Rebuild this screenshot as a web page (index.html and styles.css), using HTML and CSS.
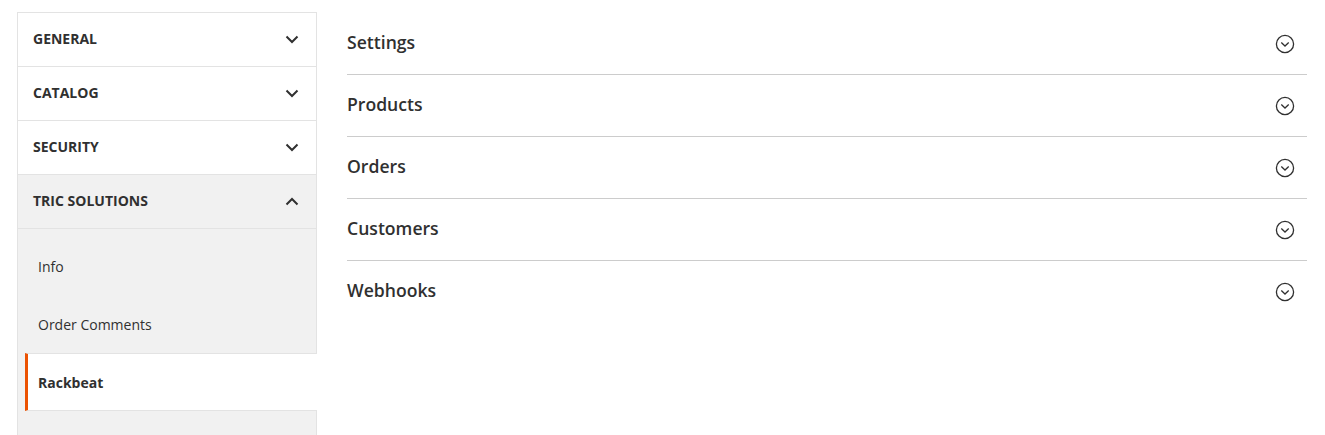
FILE: index.html
```html
<!DOCTYPE html>
<html>
<head>
<meta charset="utf-8">
<link rel="stylesheet" href="styles.css">
</head>
<body>
<div class="page">
  <nav class="side">
    <div class="group">
      <div class="title"><span>General</span>
        <svg class="chev" width="14" height="9" viewBox="0 0 14 9"><path d="M1.5 1.5 L7 7 L12.5 1.5" fill="none" stroke="#303030" stroke-width="2"/></svg>
      </div>
    </div>
    <div class="group">
      <div class="title"><span>Catalog</span>
        <svg class="chev" width="14" height="9" viewBox="0 0 14 9"><path d="M1.5 1.5 L7 7 L12.5 1.5" fill="none" stroke="#303030" stroke-width="2"/></svg>
      </div>
    </div>
    <div class="group">
      <div class="title"><span>Security</span>
        <svg class="chev" width="14" height="9" viewBox="0 0 14 9"><path d="M1.5 1.5 L7 7 L12.5 1.5" fill="none" stroke="#303030" stroke-width="2"/></svg>
      </div>
    </div>
    <div class="group open">
      <div class="title"><span>Tric Solutions</span>
        <svg class="chev" width="14" height="9" viewBox="0 0 14 9"><path d="M1.5 7.5 L7 2 L12.5 7.5" fill="none" stroke="#303030" stroke-width="2"/></svg>
      </div>
      <ul class="items">
        <li class="item">Info</li>
        <li class="item">Order Comments</li>
        <li class="item active">Rackbeat</li>
        <li class="item">Sales</li>
      </ul>
    </div>
  </nav>
  <main class="content">
    <section class="sec"><h2>Settings</h2><svg class="circ" width="20" height="20" viewBox="0 0 20 20"><circle cx="10" cy="10" r="8.6" fill="none" stroke="#303030" stroke-width="1.3"/><path d="M6.3 8.6 L10 12 L13.7 8.6" fill="none" stroke="#303030" stroke-width="1.3"/></svg></section>
    <section class="sec"><h2>Products</h2><svg class="circ" width="20" height="20" viewBox="0 0 20 20"><circle cx="10" cy="10" r="8.6" fill="none" stroke="#303030" stroke-width="1.3"/><path d="M6.3 8.6 L10 12 L13.7 8.6" fill="none" stroke="#303030" stroke-width="1.3"/></svg></section>
    <section class="sec"><h2>Orders</h2><svg class="circ" width="20" height="20" viewBox="0 0 20 20"><circle cx="10" cy="10" r="8.6" fill="none" stroke="#303030" stroke-width="1.3"/><path d="M6.3 8.6 L10 12 L13.7 8.6" fill="none" stroke="#303030" stroke-width="1.3"/></svg></section>
    <section class="sec"><h2>Customers</h2><svg class="circ" width="20" height="20" viewBox="0 0 20 20"><circle cx="10" cy="10" r="8.6" fill="none" stroke="#303030" stroke-width="1.3"/><path d="M6.3 8.6 L10 12 L13.7 8.6" fill="none" stroke="#303030" stroke-width="1.3"/></svg></section>
    <section class="sec"><h2>Webhooks</h2><svg class="circ" width="20" height="20" viewBox="0 0 20 20"><circle cx="10" cy="10" r="8.6" fill="none" stroke="#303030" stroke-width="1.3"/><path d="M6.3 8.6 L10 12 L13.7 8.6" fill="none" stroke="#303030" stroke-width="1.3"/></svg></section>
  </main>
</div>
</body>
</html>
```

FILE: styles.css
```css
html, body {
  margin: 0;
  padding: 0;
  background: #ffffff;
  font-family: "Open Sans", "Liberation Sans", sans-serif;
  color: #303030;
  overflow: hidden;
  height: 435px;
}

.page {
  display: flex;
  align-items: flex-start;
  padding: 12px 18px 0 17px;
  gap: 30px;
}

.side {
  width: 300px;
  flex: none;
  border: 1px solid #e3e3e3;
  border-bottom: none;
  box-sizing: border-box;
}

.group + .group {
  border-top: 1px solid #e3e3e3;
}

.title {
  height: 53px;
  display: flex;
  align-items: center;
  justify-content: space-between;
  padding: 0 17px 0 15px;
  font-size: 14px;
  font-weight: 700;
  text-transform: uppercase;
  color: #303030;
}

.title span {
  margin-bottom: 2px;
}

.title .chev {
  display: block;
}

.group.open .title {
  background: #f1f1f1;
  border-bottom: 1px solid #e3e3e3;
}

.items {
  list-style: none;
  margin: 0;
  padding: 8px 0 0;
  background: #f1f1f1;
}

.item {
  height: 58px;
  display: flex;
  align-items: center;
  padding-left: 20px;
  font-size: 14px;
  color: #303030;
}

.item.active {
  background: #ffffff;
  font-weight: 700;
  margin-left: 7px;
  margin-right: -1px;
  padding-left: 10px;
  border-left: 3px solid #eb5202;
  border-top: 1px solid #e3e3e3;
  border-bottom: 1px solid #e3e3e3;
  height: 56px;
}

.content {
  flex: 1;
  display: flex;
  flex-direction: column;
  padding-top: 1px;
}

.sec {
  height: 61px;
  display: flex;
  align-items: center;
  justify-content: space-between;
  padding-right: 12px;
  border-bottom: 1px solid #cccccc;
}

.sec:last-child {
  border-bottom: none;
}

.sec h2 {
  margin: 0 0 3px;
  font-size: 17.6px;
  font-weight: 600;
  color: #303030;
}

.circ {
  display: block;
}
```
